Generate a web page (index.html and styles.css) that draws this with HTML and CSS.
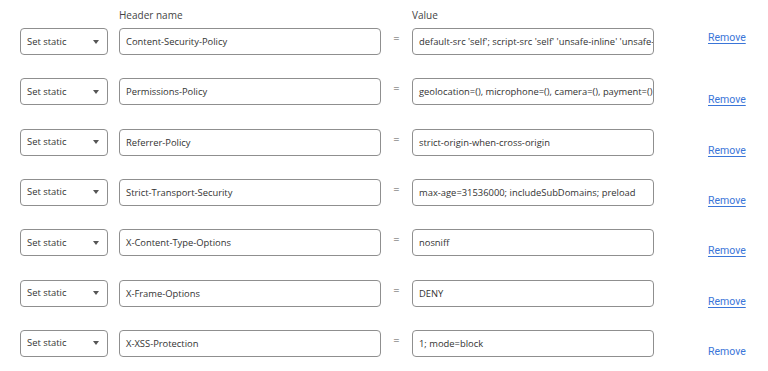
FILE: index.html
```html
<!DOCTYPE html>
<html lang="en">
<head>
  <meta charset="UTF-8">
  <title>Response headers</title>
  <link rel="stylesheet" href="styles.css">
</head>
<body>
  <div class="headers-editor">
    <div class="head-row">
      <span></span>
      <span class="col-label">Header name</span>
      <span></span>
      <span class="col-label">Value</span>
      <span></span>
    </div>

    <div class="header-row">
      <div class="select-box"><span>Set static</span><span class="caret"></span></div>
      <div class="text-box">Content-Security-Policy</div>
      <span class="equals">=</span>
      <div class="text-box">default-src 'self'; script-src 'self' 'unsafe-inline' 'unsafe-eval'</div>
      <a class="remove remove-first" href="#">Remove</a>
    </div>

    <div class="header-row">
      <div class="select-box"><span>Set static</span><span class="caret"></span></div>
      <div class="text-box">Permissions-Policy</div>
      <span class="equals">=</span>
      <div class="text-box">geolocation=(), microphone=(), camera=(), payment=()</div>
      <a class="remove" href="#">Remove</a>
    </div>

    <div class="header-row">
      <div class="select-box"><span>Set static</span><span class="caret"></span></div>
      <div class="text-box">Referrer-Policy</div>
      <span class="equals">=</span>
      <div class="text-box">strict-origin-when-cross-origin</div>
      <a class="remove" href="#">Remove</a>
    </div>

    <div class="header-row">
      <div class="select-box"><span>Set static</span><span class="caret"></span></div>
      <div class="text-box">Strict-Transport-Security</div>
      <span class="equals">=</span>
      <div class="text-box">max-age=31536000; includeSubDomains; preload</div>
      <a class="remove" href="#">Remove</a>
    </div>

    <div class="header-row">
      <div class="select-box"><span>Set static</span><span class="caret"></span></div>
      <div class="text-box">X-Content-Type-Options</div>
      <span class="equals">=</span>
      <div class="text-box">nosniff</div>
      <a class="remove" href="#">Remove</a>
    </div>

    <div class="header-row">
      <div class="select-box"><span>Set static</span><span class="caret"></span></div>
      <div class="text-box">X-Frame-Options</div>
      <span class="equals">=</span>
      <div class="text-box">DENY</div>
      <a class="remove" href="#">Remove</a>
    </div>

    <div class="header-row">
      <div class="select-box"><span>Set static</span><span class="caret"></span></div>
      <div class="text-box">X-XSS-Protection</div>
      <span class="equals">=</span>
      <div class="text-box">1; mode=block</div>
      <a class="remove" href="#">Remove</a>
    </div>
  </div>
</body>
</html>
```

FILE: styles.css
```css
body {
  margin: 0;
  background: #fff;
  font-family: 'Open Sans', sans-serif;
  color: #333;
}
.headers-editor {
  padding: 8px 0 0 20px;
  display: flex;
  flex-direction: column;
  gap: 23.33px;
}
.head-row,
.header-row {
  display: grid;
  grid-template-columns: 88px 262px 9px 242px auto;
  column-gap: 11px;
}
.head-row {
  margin-bottom: -17.33px;
}
.col-label {
  font-size: 10px;
  line-height: 14px;
  color: #444;
}
.header-row {
  height: 27px;
}
.select-box,
.text-box {
  box-sizing: border-box;
  height: 27px;
  border: 1px solid #8f8f8f;
  border-radius: 4px;
  padding: 0 7px 0 6px;
  font-size: 9.4px;
  line-height: 26px;
  white-space: nowrap;
  overflow: hidden;
  color: #333;
}
.select-box {
  display: flex;
  justify-content: space-between;
  align-items: center;
  padding-right: 8px;
}
.caret {
  width: 0;
  height: 0;
  border-left: 3px solid transparent;
  border-right: 3px solid transparent;
  border-top: 4px solid #555;
}
.equals {
  font-size: 11px;
  line-height: 19px;
  color: #555;
  text-align: center;
}
.remove {
  margin-left: 43px;
  align-self: end;
  margin-bottom: -2px;
  font-family: Roboto, sans-serif;
  font-size: 10.5px;
  line-height: 14px;
  color: #3a75d8;
  text-decoration: underline;
  text-underline-offset: 2px;
}
.remove-first {
  align-self: start;
  margin-top: 3px;
  margin-bottom: 0;
}
```
